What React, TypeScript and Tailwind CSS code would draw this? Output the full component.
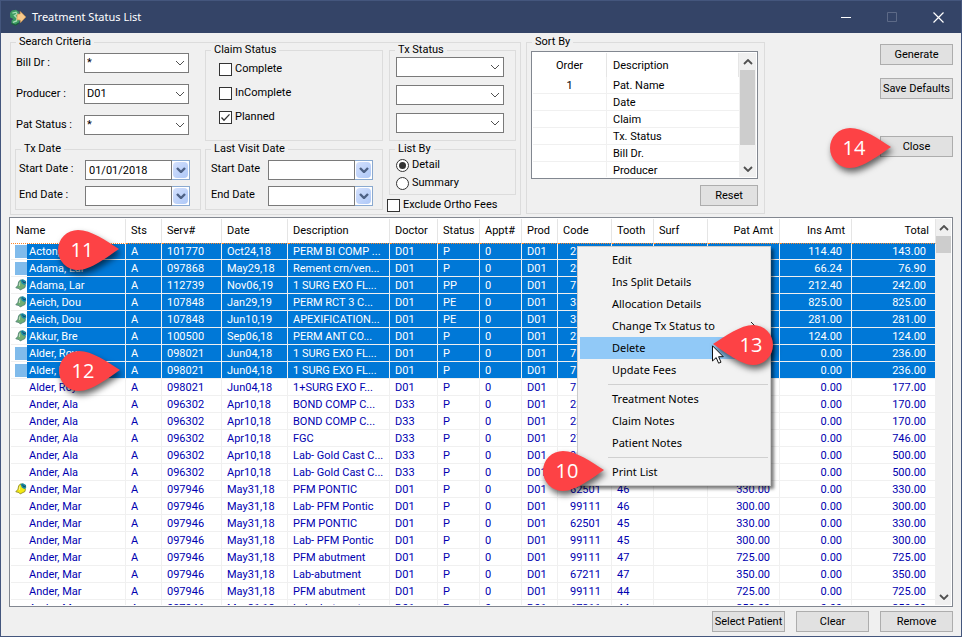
import React, { useId } from "react";

type Row = {
  name: string;
  serv: string;
  date: string;
  desc: string;
  doctor: string;
  status: string;
  code: string;
  tooth: string;
  pat: string;
  ins: string;
  total: string;
  icon?: "green" | "yellow";
  selected?: boolean;
};

function row(
  name: string, serv: string, date: string, desc: string, doctor: string, status: string,
  code: string, tooth: string, pat: string, ins: string, total: string,
  icon?: "green" | "yellow", selected?: boolean,
): Row {
  return { name, serv, date, desc, doctor, status, code, tooth, pat, ins, total, icon, selected };
}

const ROWS: Row[] = [
  row("Acton, Bry", "101770", "Oct24,18", "PERM BI COMP ...", "D01", "P", "23", "", "28.60", "114.40", "143.00", undefined, true),
  row("Adama, Lar", "097868", "May29,18", "Rement crn/ven...", "D01", "P", "29", "", "10.66", "66.24", "76.90", undefined, true),
  row("Adama, Lar", "112739", "Nov06,19", "1 SURG EXO FL...", "D01", "PP", "71", "", "29.60", "212.40", "242.00", "green", true),
  row("Aeich, Dou", "107848", "Jan29,19", "PERM RCT 3 C...", "D01", "PE", "33", "", "0.00", "825.00", "825.00", "green", true),
  row("Aeich, Dou", "107848", "Jun10,19", "APEXIFICATION...", "D01", "PE", "33", "", "0.00", "281.00", "281.00", "green", true),
  row("Akkur, Bre", "100500", "Sep06,18", "PERM ANT CO...", "D01", "P", "23", "", "0.00", "124.00", "124.00", "green", true),
  row("Alder, Roy", "098021", "Jun04,18", "1 SURG EXO FL...", "D01", "P", "71", "", "236.00", "0.00", "236.00", undefined, true),
  row("Alder, Roy", "098021", "Jun04,18", "1 SURG EXO FL...", "D01", "P", "71", "", "236.00", "0.00", "236.00", undefined, true),
  row("Alder, Roy", "098021", "Jun04,18", "1+SURG EXO F...", "D01", "P", "71", "", "177.00", "0.00", "177.00"),
  row("Ander, Ala", "096302", "Apr10,18", "BOND COMP C...", "D33", "P", "23", "", "170.00", "0.00", "170.00"),
  row("Ander, Ala", "096302", "Apr10,18", "BOND COMP C...", "D33", "P", "23", "", "170.00", "0.00", "170.00"),
  row("Ander, Ala", "096302", "Apr10,18", "FGC", "D33", "P", "27", "", "746.00", "0.00", "746.00"),
  row("Ander, Ala", "096302", "Apr10,18", "Lab- Gold Cast C...", "D33", "P", "99", "", "500.00", "0.00", "500.00"),
  row("Ander, Ala", "096302", "Apr10,18", "Lab- Gold Cast C...", "D33", "P", "99", "", "500.00", "0.00", "500.00"),
  row("Ander, Mar", "097946", "May31,18", "PFM PONTIC", "D01", "P", "62501", "46", "330.00", "0.00", "330.00", "yellow"),
  row("Ander, Mar", "097946", "May31,18", "Lab- PFM Pontic", "D01", "P", "99111", "46", "300.00", "0.00", "300.00"),
  row("Ander, Mar", "097946", "May31,18", "PFM PONTIC", "D01", "P", "62501", "45", "330.00", "0.00", "330.00"),
  row("Ander, Mar", "097946", "May31,18", "Lab- PFM Pontic", "D01", "P", "99111", "45", "300.00", "0.00", "300.00"),
  row("Ander, Mar", "097946", "May31,18", "PFM abutment", "D01", "P", "99111", "47", "725.00", "0.00", "725.00"),
  row("Ander, Mar", "097946", "May31,18", "Lab-abutment", "D01", "P", "67211", "47", "350.00", "0.00", "350.00"),
  row("Ander, Mar", "097946", "May31,18", "PFM abutment", "D01", "P", "99111", "44", "725.00", "0.00", "725.00"),
  row("Ander, Mar", "097946", "May31,18", "Lab-abutment", "D01", "P", "67211", "44", "350.00", "0.00", "350.00"),
];

const HEADERS: [string, string][] = [
  ["Name", "w-[115px]"],
  ["Sts", "w-[36px]"],
  ["Serv#", "w-[60px]"],
  ["Date", "w-[66px]"],
  ["Description", ""],
  ["Doctor", "w-[48px]"],
  ["Status", "w-[42px]"],
  ["Appt#", "w-[42px]"],
  ["Prod", "w-[36px]"],
  ["Code", "w-[54px]"],
  ["Tooth", "w-[42px]"],
  ["Surf", "w-[54px]"],
  ["Pat Amt", "w-[72px]"],
  ["Ins Amt", "w-[72px]"],
  ["Total", "w-[84px]"],
];

const SORT_ROWS = [
  ["1", "Pat. Name"],
  ["", "Date"],
  ["", "Claim"],
  ["", "Tx. Status"],
  ["", "Bill Dr."],
  ["", "Producer"],
];

function Chevron({ className = "", up = false, weight = 1 }: { className?: string; up?: boolean; weight?: number }) {
  return (
    <svg viewBox="0 0 10 6" className={`h-[6px] w-[10px] ${className}`} fill="none" stroke="currentColor" strokeWidth={weight} aria-hidden="true">
      <path d={up ? "M1 5 5 1 9 5" : "M1 1 5 5 9 1"} />
    </svg>
  );
}

function Combo({ value = "", label, id, width = "w-[105px]" }: { value?: string; label?: string; id?: string; width?: string }) {
  return (
    <span className={`relative flex h-5 ${width}`}>
      <select id={id} aria-label={label} defaultValue={value} className="h-full w-full appearance-none border border-[#7a7a7a] bg-white pl-0.5 pr-5 text-[11px] leading-[16px]">
        <option value={value}>{value}</option>
      </select>
      <Chevron className="pointer-events-none absolute right-1 top-[7px] text-[#505050]" />
    </span>
  );
}

function LabeledCombo({ label, value }: { label: string; value: string }) {
  const id = useId();
  return (
    <div className="flex h-5 items-center">
      <label htmlFor={id} className="w-[68px]">{label}</label>
      <Combo id={id} value={value} />
    </div>
  );
}

function DateField({ label, value = "", labelClass }: { label: string; value?: string; labelClass: string }) {
  const id = useId();
  return (
    <div className="flex h-5 items-center">
      <label htmlFor={id} className={`${labelClass} pb-0.5`}>{label}</label>
      <input id={id} type="text" defaultValue={value} className="h-full w-[87px] border border-[#7a7a7a] bg-white px-[3px] text-[11px]" />
      <button type="button" aria-label={`${label} calendar`} className="flex h-full w-[18px] border border-l-0 border-[#8aa9cf] bg-white p-px">
        <span className="flex h-full w-full items-center justify-center rounded-sm bg-linear-to-br from-[#d3e0fd] to-[#aec8f7] text-[#4d6185]">
          <Chevron weight={2.4} />
        </span>
      </button>
    </div>
  );
}

function Group({ title, className = "", children }: { title: string; className?: string; children: React.ReactNode }) {
  return (
    <fieldset className={`border border-[#dcdcdc] ${className}`}>
      <legend className="ml-[5px] px-[3px] leading-[14px]">{title}</legend>
      {children}
    </fieldset>
  );
}

function Check({ label, checked = false }: { label: string; checked?: boolean }) {
  return (
    <label className="flex h-[14px] items-center gap-[3px]">
      <span className="relative flex size-[13px]">
        <input type="checkbox" defaultChecked={checked} className="peer size-[13px] appearance-none border border-[#333] bg-white" />
        <svg viewBox="0 0 13 13" className="pointer-events-none absolute inset-0 hidden size-[13px] peer-checked:block" fill="none" stroke="#333" strokeWidth="1.3" aria-hidden="true">
          <path d="M2.5 6.5 5 9.2 10.5 3.4" />
        </svg>
      </span>
      {label}
    </label>
  );
}

function Radio({ label, checked = false }: { label: string; checked?: boolean }) {
  return (
    <label className="flex h-[14px] items-center gap-[3px]">
      <span className="relative flex size-[13px]">
        <input type="radio" name="list-by" defaultChecked={checked} className="peer size-[13px] appearance-none rounded-full border border-[#333] bg-white" />
        <span className="pointer-events-none absolute inset-[3px] hidden rounded-full bg-[#333] peer-checked:block" />
      </span>
      {label}
    </label>
  );
}

function PushButton({ children, className = "w-[73px]" }: { children: string; className?: string }) {
  return (
    <button type="button" className={`h-[21px] whitespace-nowrap border border-[#adadad] bg-[#e1e1e1] text-center leading-[19px] ${className}`}>
      {children}
    </button>
  );
}

function ScrollBar({ thumb, width = "w-[17px]" }: { thumb: string; width?: string }) {
  return (
    <div className={`flex shrink-0 flex-col items-center bg-[#f0f0f0] text-[#505050] ${width}`} aria-hidden="true">
      <span className="flex h-[17px] items-center"><Chevron up weight={1.8} /></span>
      <span className={`w-[15px] bg-[#cdcdcd] ${thumb}`} />
      <span className="mt-auto flex h-[17px] items-center"><Chevron weight={1.8} /></span>
    </div>
  );
}

function BellIcon({ color }: { color: "green" | "yellow" }) {
  const body = color === "green" ? "#6fae74" : "#f4ea12";
  return (
    <svg viewBox="0 0 12 14" className="h-[14px] w-3" aria-hidden="true">
      <path d="M5 2.2 8 2 10.4 7 10 9.5 7 11 5.2 12 4 10.5 .8 9.8 3 7.2 3.6 4Z" fill={body} stroke={color === "green" ? "#4c7d74" : "#8a8420"} strokeWidth=".8" />
      <path d="M5.4 2 8 1.2 11 3 11.2 6 9.2 7 6.8 5.5Z" fill="#1b8fa3" />
      <path d="M7.4 2.6 8.8 4.8 10.6 4.2" stroke="#1b3f6b" strokeWidth="1" fill="none" />
      <path d="M4.8 4.4 4.4 8" stroke="#fff" strokeOpacity=".55" strokeWidth="1" />
    </svg>
  );
}

function AppIcon() {
  return (
    <svg viewBox="0 0 17 17" className="size-[17px]" aria-hidden="true">
      <path d="M3 1.5 7 .8 10 3 9.5 6 11 9.5 10 14 6.5 16 2.5 14.5 2.6 11.5 4.5 10 1.2 8.5 1 4Z" fill="#3c9a62" />
      <path d="M3.4 4.2 7 3.2 8 5 5.5 6.6 8 9 7.5 12 4 13.3" fill="none" stroke="#a5dcb4" strokeWidth="1.4" />
      <path d="M2.5 14.5 6.5 16 10 14" fill="none" stroke="#1c5a3a" strokeWidth="1.2" />
      <path d="M8.2 5.2 11.2 5 11.2 2.4 16.8 8 11.6 13.6 11.2 11 8 10.8Z" fill="#f8c98a" stroke="#d89a4e" strokeWidth=".6" />
    </svg>
  );
}

function Marker({ n, className, flip = false }: { n: number; className: string; flip?: boolean }) {
  return (
    <div className={`absolute h-[42px] w-[62px] ${className}`}>
      <svg viewBox="0 0 62 42" className="h-full w-full overflow-visible drop-shadow-[2px_4px_3px_rgba(0,0,0,0.6)]" aria-hidden="true">
        <path
          d={flip ? "M0 20 C12 12 28 1 40 1 A20 20 0 0 1 40 41 C28 41 12 28 0 20Z" : "M62 20 C50 12 34 1 21 1 A20 20 0 0 0 21 41 C34 41 50 28 62 20Z"}
          fill="#fd4245"
        />
      </svg>
      <span className={`absolute inset-y-0 flex w-10 items-center justify-center font-['Open_Sans',sans-serif] text-[20px] leading-[42px] text-white ${flip ? "right-1" : "left-[5px]"}`}>
        {n}
      </span>
    </div>
  );
}

function MenuItem({ children, active = false, sub = false }: { children: string; active?: boolean; sub?: boolean }) {
  return (
    <button type="button" role="menuitem" className={`flex h-[22px] w-full items-center justify-between pl-8 pr-3 text-left ${active ? "bg-[#91c9f7]" : ""}`}>
      {children}
      {sub && (
        <svg viewBox="0 0 6 10" className="h-[10px] w-[6px]" fill="none" stroke="#222" aria-hidden="true"><path d="M1 1 5 5 1 9" /></svg>
      )}
    </button>
  );
}

function ContextMenu() {
  return (
    <div role="menu" className="absolute left-[576px] top-[245px] w-[194px] border border-[#ccc] bg-[#f2f2f2] p-0.5 font-['Noto_Sans',sans-serif] text-[11px] shadow-[3px_3px_3px_rgba(0,0,0,0.5)]">
      <MenuItem>Edit</MenuItem>
      <MenuItem>Ins Split Details</MenuItem>
      <MenuItem>Allocation Details</MenuItem>
      <MenuItem sub>Change Tx Status to</MenuItem>
      <MenuItem active>Delete</MenuItem>
      <MenuItem>Update Fees</MenuItem>
      <hr className="my-[3px] ml-7 border-[#d0d0d0]" />
      <MenuItem>Treatment Notes</MenuItem>
      <MenuItem>Claim Notes</MenuItem>
      <MenuItem>Patient Notes</MenuItem>
      <hr className="my-[3px] ml-7 border-[#d0d0d0]" />
      <MenuItem>Print List</MenuItem>
    </div>
  );
}

function TreatmentRow({ r, focused }: { r: Row; focused: boolean }) {
  const line = "h-[17px] border-b border-r border-[#f0f0f0] p-0 leading-[15px]";
  const focus = focused ? "border-t border-t-[#ff8728] [border-top-style:dotted]" : "";
  const fill = r.selected ? "bg-[#0078d7] text-white" : "";
  const cell = `${line} ${focus} ${fill} overflow-hidden pl-[5px] whitespace-nowrap`;
  const amount = `${line} ${focus} ${fill} pr-[9px] text-right`;
  return (
    <tr>
      <td className={`${line} ${focus}`}>
        <div className={`flex overflow-hidden pl-1 ${focused ? "h-[15px]" : "h-4"}`}>
          <span className="flex w-3 shrink-0 items-center">
            {r.icon && <BellIcon color={r.icon} />}
            {r.selected && !r.icon && <span className="h-[13px] w-full bg-[#80bbeb]" />}
          </span>
          <span className={`flex flex-1 items-center pl-0.5 ${fill}`}>{r.name}</span>
        </div>
      </td>
      <td className={cell}>A</td>
      <td className={cell}>{r.serv}</td>
      <td className={cell}>{r.date}</td>
      <td className={cell}>{r.desc}</td>
      <td className={cell}>{r.doctor}</td>
      <td className={cell}>{r.status}</td>
      <td className={cell}>0</td>
      <td className={cell}>D01</td>
      <td className={`${line} ${focus} ${fill} pl-3`}>{r.code}</td>
      <td className={cell}>{r.tooth}</td>
      <td className={cell}></td>
      <td className={amount}>{r.pat}</td>
      <td className={amount}>{r.ins}</td>
      <td className={amount}>{r.total}</td>
    </tr>
  );
}

export default function App() {
  return (
    <div className="relative flex h-screen flex-col overflow-hidden border border-[#44567d] bg-[#f0f0f0] font-['Roboto','Liberation_Sans',sans-serif] text-[11px] leading-[14px] text-black">
      <header className="flex h-8 shrink-0 items-center bg-[#344467] pl-2 text-white">
        <AppIcon />
        <h1 className="pl-1.5 font-['Noto_Sans',sans-serif] text-[11px]">Treatment Status List</h1>
        <div className="ml-auto flex h-full">
          <button type="button" aria-label="Minimize" className="flex w-[46px] items-center justify-center">
            <svg viewBox="0 0 11 11" className="size-[11px]" stroke="#fff" aria-hidden="true"><path d="M0 5.5H10" /></svg>
          </button>
          <button type="button" aria-label="Maximize" className="flex w-[46px] items-center justify-center">
            <svg viewBox="0 0 11 11" className="size-[11px]" fill="none" stroke="#5d6a87" aria-hidden="true"><path d="M.5 .5H9.5V9.5H.5Z" /></svg>
          </button>
          <button type="button" aria-label="Close window" className="flex w-[46px] items-center justify-center">
            <svg viewBox="0 0 11 11" className="size-[11px]" stroke="#fff" strokeWidth="1.2" aria-hidden="true"><path d="M.5 .5 10.5 10.5M10.5 .5 .5 10.5" /></svg>
          </button>
        </div>
      </header>

      <main className="flex min-h-0 flex-1 flex-col px-2 pb-1 pt-0.5">
        <section className="flex shrink-0 items-start pl-px">
          <Group title="Search Criteria">
            <div className="-mt-1.5 flex items-start gap-1 pb-0.5 pr-1">
              <div className="w-[190px]">
                <div className="flex flex-col gap-[11px] pb-[7px] pl-[5px] pt-[10px]">
                  <LabeledCombo label="Bill Dr :" value="*" />
                  <LabeledCombo label="Producer :" value="D01" />
                  <LabeledCombo label="Pat Status :" value="*" />
                </div>
                <Group title="Tx Date" className="ml-1">
                  <div className="flex flex-col gap-1.5 pb-[3px] pl-[3px] pt-1">
                    <DateField label="Start Date :" value="01/01/2018" labelClass="w-[66px]" />
                    <DateField label="End Date :" labelClass="w-[66px]" />
                  </div>
                </Group>
              </div>

              <div className="flex w-[178px] flex-col gap-px">
                <Group title="Claim Status">
                  <div className="flex h-[83px] flex-col gap-[10px] pl-[13px] pt-[5px]">
                    <Check label="Complete" />
                    <Check label="InComplete" />
                    <Check label="Planned" checked />
                  </div>
                </Group>
                <Group title="Last Visit Date">
                  <div className="flex flex-col gap-1.5 pb-[3px] pl-[5px] pt-1">
                    <DateField label="Start Date" labelClass="w-[57px]" />
                    <DateField label="End Date" labelClass="w-[57px]" />
                  </div>
                </Group>
              </div>

              <div className="flex w-[129px] flex-col gap-px">
                <Group title="Tx Status" className="ml-0.5">
                  <div className="flex h-[83px] flex-col gap-2 pl-1.5">
                    <Combo label="Tx status 1" width="w-[108px]" />
                    <Combo label="Tx status 2" width="w-[108px]" />
                    <Combo label="Tx status 3" width="w-[108px]" />
                  </div>
                </Group>
                <Group title="List By" className="ml-0.5">
                  <div className="flex flex-col gap-1 pb-1 pl-1.5 pt-0.5">
                    <Radio label="Detail" checked />
                    <Radio label="Summary" />
                  </div>
                </Group>
                <div className="pt-0.5"><Check label="Exclude Ortho Fees" /></div>
              </div>
            </div>
          </Group>

          <Group title="Sort By" className="ml-[5px]">
            <div className="flex w-[237px] flex-col gap-1.5 pb-[7px] pl-1 pr-1.5 pt-0.5">
              <div className="flex h-32 overflow-hidden border border-[#828790] bg-white p-px">
                <div className="min-w-0 flex-1 overflow-hidden">
                  <table className="w-full table-fixed border-separate border-spacing-0">
                    <thead>
                      <tr>
                        <th className="h-6 w-[74px] border-r border-[#e5e5e5] p-0 pt-0.5 font-normal">Order</th>
                        <th className="border-r border-[#e5e5e5] p-0 pl-1.5 pt-0.5 text-left font-normal">Description</th>
                      </tr>
                    </thead>
                    <tbody>
                      {SORT_ROWS.map(([order, desc]) => (
                        <tr key={desc}>
                          <td className="h-[17px] border-b border-r border-[#f0f0f0] p-0 pt-0.5 text-center">{order}</td>
                          <td className="border-b border-[#f0f0f0] p-0 pl-1.5 pt-0.5">{desc}</td>
                        </tr>
                      ))}
                    </tbody>
                  </table>
                </div>
                <ScrollBar thumb="h-[75px]" />
              </div>
              <PushButton className="w-[58px] self-end">Reset</PushButton>
            </div>
          </Group>

          <div className="ml-auto flex flex-col gap-[13px] pt-[9px]">
            <PushButton>Generate</PushButton>
            <PushButton>Save Defaults</PushButton>
            <div className="pt-6"><PushButton>Close</PushButton></div>
          </div>
        </section>

        <section className="mt-0.5 flex min-h-0 flex-1 border border-[#828790] bg-white p-px">
          <div className="min-w-0 flex-1 overflow-hidden">
            <table className="w-full table-fixed border-separate border-spacing-0">
              <thead>
                <tr>
                  {HEADERS.map(([h, w], i) => (
                    <th key={h} className={`h-6 border-r border-[#e5e5e5] p-0 font-normal ${w} ${i > 11 ? "pr-1.5 text-right" : "pl-[5px] text-left"}`}>{h}</th>
                  ))}
                </tr>
              </thead>
              <tbody className="text-[#0000b0]">
                {ROWS.map((r, i) => <TreatmentRow key={i} r={r} focused={i === 0} />)}
              </tbody>
            </table>
          </div>
          <ScrollBar thumb="h-[17px]" width="w-[15px]" />
        </section>

        <footer className="flex shrink-0 justify-end gap-[11px] pt-1">
          <PushButton>Select Patient</PushButton>
          <PushButton>Clear</PushButton>
          <PushButton>Remove</PushButton>
        </footer>
      </main>

      <ContextMenu />
      <Marker n={10} className="left-[541px] top-[449px]" />
      <Marker n={11} className="left-[56px] top-[228px]" />
      <Marker n={12} className="left-[57px] top-[349px]" />
      <Marker n={13} flip className="left-[712px] top-[323px]" />
      <Marker n={14} className="left-[828px] top-[126px]" />
      <svg viewBox="0 0 12 19" className="absolute left-[711px] top-[344px] h-[19px] w-3 overflow-visible" aria-hidden="true">
        <path d="M.5 .8V16L4.2 12.6 6.6 18.2 9 17.2 6.6 11.7H11.3Z" fill="#fff" stroke="#111" />
      </svg>
    </div>
  );
}
